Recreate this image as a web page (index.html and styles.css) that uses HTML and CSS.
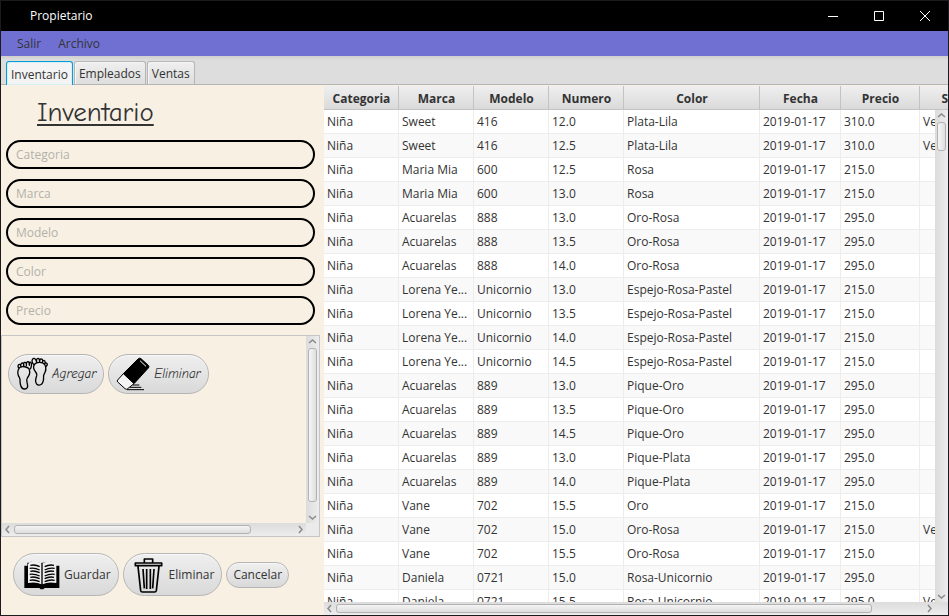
FILE: index.html
```html
<!DOCTYPE html>
<html lang="es">
<head>
<meta charset="utf-8">
<title>Propietario</title>
<link rel="stylesheet" href="styles.css">
</head>
<body>
<div class="window">
  <header class="titlebar">
    <span class="titlebar-name">Propietario</span>
    <button class="win-btn" type="button" aria-label="Minimizar"><svg width="12" height="12" viewBox="0 0 12 12"><path d="M1 6.500h10"/></svg></button>
    <button class="win-btn" type="button" aria-label="Maximizar"><svg width="12" height="12" viewBox="0 0 12 12"><path d="M1.500 1.500h9v9h-9z"/></svg></button>
    <button class="win-btn" type="button" aria-label="Cerrar"><svg width="12" height="12" viewBox="0 0 12 12"><path d="M1 1l10 10M11 1L1 11"/></svg></button>
  </header>
  <nav class="menubar">
    <button type="button">Salir</button>
    <button type="button">Archivo</button>
  </nav>
  <div class="tabs" role="tablist">
    <button class="tab tab-active" type="button" role="tab" aria-selected="true">Inventario</button>
    <button class="tab" type="button" role="tab">Empleados</button>
    <button class="tab" type="button" role="tab">Ventas</button>
  </div>
  <main class="content">
    <section class="side">
      <h1>Inventario</h1>
      <form class="fields">
        <input type="text" placeholder="Categoria" aria-label="Categoria">
        <input type="text" placeholder="Marca" aria-label="Marca">
        <input type="text" placeholder="Modelo" aria-label="Modelo">
        <input type="text" placeholder="Color" aria-label="Color">
        <input type="text" placeholder="Precio" aria-label="Precio">
      </form>
      <div class="pane">
        <div class="pane-view">
          <button class="pill pill-script" type="button">
            <svg width="32" height="34" viewBox="0 0 96 102" class="line-icon">
              <path d="M9 34C3 42 5 54 10 61c4 6 1 12 3 20 2 10 6 16 14 15 8-1 9-8 7-16-2-7-4-11 0-17 6-7 9-15 6-25-2-8-25-14-31-4z"/>
              <path d="M55 23c-5 8-2 15 4 22 6 6 4 10 1 18-3 9-1 19 7 21 7 1 13-4 15-13 2-8-1-12 2-19 5-8 8-18 3-28-6-10-27-10-32-1z"/>
              <path d="M8 34c-3-6-2-12 2-12s5 4 5 8c-2-7 0-12 4-12s5 4 4 9c-1-7 0-11 4-11s5 4 4 10c0-7 1-12 5-12s4 6 4 11c0-9 1-11 4-9 4 3 3 14-2 21"/>
              <path d="M55 24c-7-4-9-15-4-19 6-3 10 4 11 12-1-9 0-13 4-13s5 4 5 11c0-6 1-10 5-9 4 0 5 5 3 11 1-6 3-8 6-6 3 1 3 6 1 10 2-4 5-4 7-1 2 3 0 7-4 9"/>
            </svg>
            Agregar
          </button>
          <button class="pill pill-script" type="button">
            <svg width="34" height="34" viewBox="0 0 102 102">
              <path fill="#000" stroke="#000" stroke-width="3" stroke-linejoin="round" d="M67 5q4-3 8 0l22 20q4 4 0 8L54 80 22 50z"/>
              <path fill="none" stroke="#fff" stroke-width="3" d="M72 11l18 17"/>
              <path fill="#f4f4f4" stroke="#000" stroke-width="3" stroke-linejoin="round" d="M22 50L5 69q-3 3 0 6l22 20q4 4 8 0l19-15z"/>
              <path stroke="#000" stroke-width="3" d="M33 98h51M42 91h34M50 84h20"/>
            </svg>
            Eliminar
          </button>
        </div>
        <div class="bar bar-v">
          <svg class="arrow" viewBox="0 0 9 9"><path d="M1 6l3.500-3L8 6"/></svg>
          <span class="thumb thumb-pane-v"></span>
          <svg class="arrow arrow-end" viewBox="0 0 9 9"><path d="M1 3l3.500 3L8 3"/></svg>
        </div>
        <div class="bar bar-h">
          <svg class="arrow" viewBox="0 0 9 9"><path d="M6 1L3 4.500L6 8"/></svg>
          <span class="thumb thumb-pane-h"></span>
          <svg class="arrow" viewBox="0 0 9 9"><path d="M3 1l3 3.500L3 8"/></svg>
        </div>
        <div class="bar"></div>
      </div>
      <div class="actions">
        <button class="pill pill-tall" type="button">
          <svg width="36" height="30" viewBox="0 0 108 90">
            <path fill="#000" d="M1 17h9V8h10v-3l30 4 32-4v3h10v9h14v67H62l-4 4h-8l-4-4H1z"/>
            <path fill="#eee" d="M12 13l5-7q23-5 35 4v63q-16-9-40-4zM56 10Q70 1 92 6l5 7v56q-25-5-41 4z"/>
            <path class="text-lines" d="M19 16q16-3 28 4M17 25q15-3 30 5M19 34q13-3 28 4M17 43q15-2 30 5M19 52q14-3 28 4M17 61q15-3 30 4M62 20q13-7 28-4M62 30q14-8 30-5M62 38q13-7 28-4M62 48q14-7 30-5M62 56q13-7 28-4M62 65q14-7 30-4"/>
          </svg>
          Guardar
        </button>
        <button class="pill pill-tall pill-trash" type="button">
          <svg width="29" height="36" viewBox="0 0 87 108" class="line-icon thick">
            <path d="M4 18h79v8H4zM31 16V6h25v10M12 28l8 73q1 4 5 4h37q4 0 5-4l8-73M27 36l4 58M38 36v60M49 36v60M60 36l-4 58"/>
          </svg>
          Eliminar
        </button>
        <button class="pill pill-small" type="button">Cancelar</button>
      </div>
    </section>
    <section class="grid-area">
      <div class="grid-view">
        <table>
          <colgroup><col class="c-s"><col class="c-s"><col class="c-s"><col class="c-s"><col class="c-color"><col class="c-date"><col class="c-price"><col></colgroup>
          <thead><tr><th>Categoria</th><th>Marca</th><th>Modelo</th><th>Numero</th><th>Color</th><th>Fecha</th><th>Precio</th><th class="cut">S</th></tr></thead>
          <tbody>
            <tr><td>Niña</td><td>Sweet</td><td>416</td><td>12.0</td><td>Plata-Lila</td><td>2019-01-17</td><td>310.0</td><td>Ve</td></tr>
            <tr><td>Niña</td><td>Sweet</td><td>416</td><td>12.5</td><td>Plata-Lila</td><td>2019-01-17</td><td>310.0</td><td>Ve</td></tr>
            <tr><td>Niña</td><td>Maria Mia</td><td>600</td><td>12.5</td><td>Rosa</td><td>2019-01-17</td><td>215.0</td><td></td></tr>
            <tr><td>Niña</td><td>Maria Mia</td><td>600</td><td>13.0</td><td>Rosa</td><td>2019-01-17</td><td>215.0</td><td></td></tr>
            <tr><td>Niña</td><td>Acuarelas</td><td>888</td><td>13.0</td><td>Oro-Rosa</td><td>2019-01-17</td><td>295.0</td><td></td></tr>
            <tr><td>Niña</td><td>Acuarelas</td><td>888</td><td>13.5</td><td>Oro-Rosa</td><td>2019-01-17</td><td>295.0</td><td></td></tr>
            <tr><td>Niña</td><td>Acuarelas</td><td>888</td><td>14.0</td><td>Oro-Rosa</td><td>2019-01-17</td><td>295.0</td><td></td></tr>
            <tr><td>Niña</td><td>Lorena Ye...</td><td>Unicornio</td><td>13.0</td><td>Espejo-Rosa-Pastel</td><td>2019-01-17</td><td>215.0</td><td></td></tr>
            <tr><td>Niña</td><td>Lorena Ye...</td><td>Unicornio</td><td>13.5</td><td>Espejo-Rosa-Pastel</td><td>2019-01-17</td><td>215.0</td><td></td></tr>
            <tr><td>Niña</td><td>Lorena Ye...</td><td>Unicornio</td><td>14.0</td><td>Espejo-Rosa-Pastel</td><td>2019-01-17</td><td>215.0</td><td></td></tr>
            <tr><td>Niña</td><td>Lorena Ye...</td><td>Unicornio</td><td>14.5</td><td>Espejo-Rosa-Pastel</td><td>2019-01-17</td><td>215.0</td><td></td></tr>
            <tr><td>Niña</td><td>Acuarelas</td><td>889</td><td>13.0</td><td>Pique-Oro</td><td>2019-01-17</td><td>295.0</td><td></td></tr>
            <tr><td>Niña</td><td>Acuarelas</td><td>889</td><td>13.5</td><td>Pique-Oro</td><td>2019-01-17</td><td>295.0</td><td></td></tr>
            <tr><td>Niña</td><td>Acuarelas</td><td>889</td><td>14.5</td><td>Pique-Oro</td><td>2019-01-17</td><td>295.0</td><td></td></tr>
            <tr><td>Niña</td><td>Acuarelas</td><td>889</td><td>13.0</td><td>Pique-Plata</td><td>2019-01-17</td><td>295.0</td><td></td></tr>
            <tr><td>Niña</td><td>Acuarelas</td><td>889</td><td>14.0</td><td>Pique-Plata</td><td>2019-01-17</td><td>295.0</td><td></td></tr>
            <tr><td>Niña</td><td>Vane</td><td>702</td><td>15.5</td><td>Oro</td><td>2019-01-17</td><td>215.0</td><td></td></tr>
            <tr><td>Niña</td><td>Vane</td><td>702</td><td>15.0</td><td>Oro-Rosa</td><td>2019-01-17</td><td>215.0</td><td>Ve</td></tr>
            <tr><td>Niña</td><td>Vane</td><td>702</td><td>15.5</td><td>Oro-Rosa</td><td>2019-01-17</td><td>215.0</td><td></td></tr>
            <tr><td>Niña</td><td>Daniela</td><td>0721</td><td>15.0</td><td>Rosa-Unicornio</td><td>2019-01-17</td><td>295.0</td><td></td></tr>
            <tr><td>Niña</td><td>Daniela</td><td>0721</td><td>15.5</td><td>Rosa-Unicornio</td><td>2019-01-17</td><td>295.0</td><td>Ve</td></tr>
          </tbody>
        </table>
        <div class="bar bar-v grid-bar">
          <svg class="arrow" viewBox="0 0 9 9"><path d="M1 6l3.500-3L8 6"/></svg>
          <span class="thumb thumb-grid-v"></span>
          <svg class="arrow arrow-end" viewBox="0 0 9 9"><path d="M1 3l3.500 3L8 3"/></svg>
        </div>
      </div>
      <div class="bar bar-h">
        <svg class="arrow" viewBox="0 0 9 9"><path d="M6 1L3 4.500L6 8"/></svg>
        <span class="thumb thumb-grid-h"></span>
        <svg class="arrow" viewBox="0 0 9 9"><path d="M3 1l3 3.500L3 8"/></svg>
        <span class="corner"></span>
      </div>
    </section>
  </main>
</div>
</body>
</html>
```
FILE: styles.css
```css
* { box-sizing: border-box; }
body {
  margin: 0;
  font-family: "Segoe UI", "Open Sans", "Noto Sans", sans-serif;
  font-size: 12px;
  line-height: 16px;
  color: #333;
}
button, input { font: inherit; color: inherit; }
button { padding: 0; border: 0; background: none; }

.window {
  display: flex;
  flex-direction: column;
  height: 100vh;
  overflow: hidden;
  border: 1px solid #1c1a1c;
  background: #f7f0e3;
}
.titlebar {
  display: flex;
  align-items: center;
  flex: none;
  height: 30px;
  background: #000;
  color: #fff;
}
.titlebar-name { flex: 1; padding-left: 29px; }
.win-btn { display: grid; place-items: center; width: 46px; height: 30px; }
.win-btn svg { fill: none; stroke: #fff; stroke-width: 1; }

.menubar {
  display: flex;
  flex: none;
  gap: 17px;
  height: 25px;
  padding-left: 16px;
  background: #7070d3;
}
.tabs {
  display: flex;
  flex: none;
  align-items: flex-end;
  gap: 1px;
  height: 29px;
  padding-left: 5px;
  border-bottom: 1px solid #b5b5b5;
  background: linear-gradient(#cfcfcf, #ddd 4px);
}
.tab {
  height: 23px;
  padding: 2px 4px 0;
  border: 1px solid #b5b5b5;
  border-bottom: 0;
  border-radius: 3px 3px 0 0;
  background: linear-gradient(#efefef, #dedede);
  box-shadow: inset 1px 1px #f6f6f6;
}
.tab-active {
  height: 24px;
  margin-bottom: -1px;
  border-color: #039ed3;
  background: #f4f4f4;
  box-shadow: inset 0 0 0 1px #d5eef7;
}

.content { display: flex; flex: 1; min-height: 0; }
.side { display: flex; flex-direction: column; flex: none; width: 323px; }
h1 {
  margin: 12px 0 0 36px;
  font: 27px/32px "Comic Sans MS", "Comic Neue", "Open Sans", sans-serif;
  text-decoration: underline;
  text-decoration-thickness: 2px;
  text-underline-offset: 3px;
}
.fields {
  display: flex;
  flex-direction: column;
  gap: 10px;
  padding: 11px 9px 10px 5px;
}
.fields input {
  width: 100%;
  height: 29px;
  padding: 0 8px;
  border: 2px solid #000;
  border-radius: 15px;
  background: transparent;
}
.fields input::placeholder { color: #b3b0aa; opacity: 1; }

.pane {
  display: grid;
  flex: none;
  grid-template: 187px 13px / 1fr 13px;
  margin-right: 4px;
  border: 1px solid #c5c5c5;
}
.pane-view { display: flex; align-items: flex-start; gap: 4px; padding: 18px 6px; }
.bar { display: flex; align-items: center; background: #ebebeb; }
.bar-v { flex-direction: column; background: linear-gradient(90deg, #dcdcdc, #ededed); }
.bar-h { height: 13px; background: linear-gradient(#dcdcdc, #ededed); }
.arrow { flex: none; width: 9px; height: 9px; margin: 1px; fill: none; stroke: #8b8b8b; stroke-width: 1.500; }
.thumb { border: 1px solid #b2b2b2; border-radius: 3px; }
.bar-v .thumb { width: 9px; margin-top: 1px; background: linear-gradient(90deg, #f6f6f6, #dedede); }
.bar-h .thumb { height: 9px; margin-left: 1px; background: linear-gradient(#f4f4f4, #dedede); }
.thumb-pane-v { height: 154px; }
.thumb-pane-h { width: 237px; margin-right: 44px; }

.pill {
  display: flex;
  flex: none;
  align-items: center;
  gap: 4px;
  height: 40px;
  padding: 0 7px;
  border: 1px solid #b5b5b5;
  border-radius: 22px;
  background: linear-gradient(#efefef, #d9d9d9);
  box-shadow: inset 0 1px #f8f8f8;
}
.pill-script { font-family: "Comic Sans MS", "Comic Neue", "Open Sans", sans-serif; font-size: 13px; font-style: italic; }
.pill-tall { height: 43px; padding: 0 7px 0 10px; }
.pill-trash { gap: 6px; }
.pill-small { height: 26px; padding: 0 6px; }
.line-icon { fill: none; stroke: #000; stroke-width: 4; stroke-linejoin: round; }
.thick { stroke-width: 5; }
.text-lines { fill: none; stroke: #000; stroke-width: 4; }
.actions { display: flex; align-items: center; gap: 4px; padding: 16px 12px; }

.grid-area { display: flex; flex: 1; flex-direction: column; min-width: 0; padding-top: 1px; }
.grid-view { position: relative; flex: 1; min-height: 0; overflow: hidden; background: #fff; }
table { width: 100%; table-layout: fixed; border-collapse: separate; border-spacing: 0; }
.c-s { width: 75px; }
.c-color { width: 136px; }
.c-date { width: 81px; }
.c-price { width: 79px; }
th, td {
  height: 24px;
  padding: 0 3px;
  overflow: hidden;
  white-space: nowrap;
  border-right: 1px solid #ededed;
  border-bottom: 1px solid #ededed;
  text-align: left;
}
th {
  padding: 2px 0 0 1px;
  border-color: #c3c3c3;
  background: linear-gradient(#efefef, #dadada);
  text-align: center;
}
th:last-child, td:last-child { border-right: 0; }
th.cut { text-align: right; }
tbody tr:nth-child(even) { background: #f9f9f9; }
.grid-bar { position: absolute; top: 24px; right: 0; bottom: 0; width: 13px; }
.thumb-grid-v { height: 29px; }
.arrow-end { margin-top: auto; }
.thumb-grid-h { width: 536px; margin-right: auto; }
.corner { width: 13px; }
```
